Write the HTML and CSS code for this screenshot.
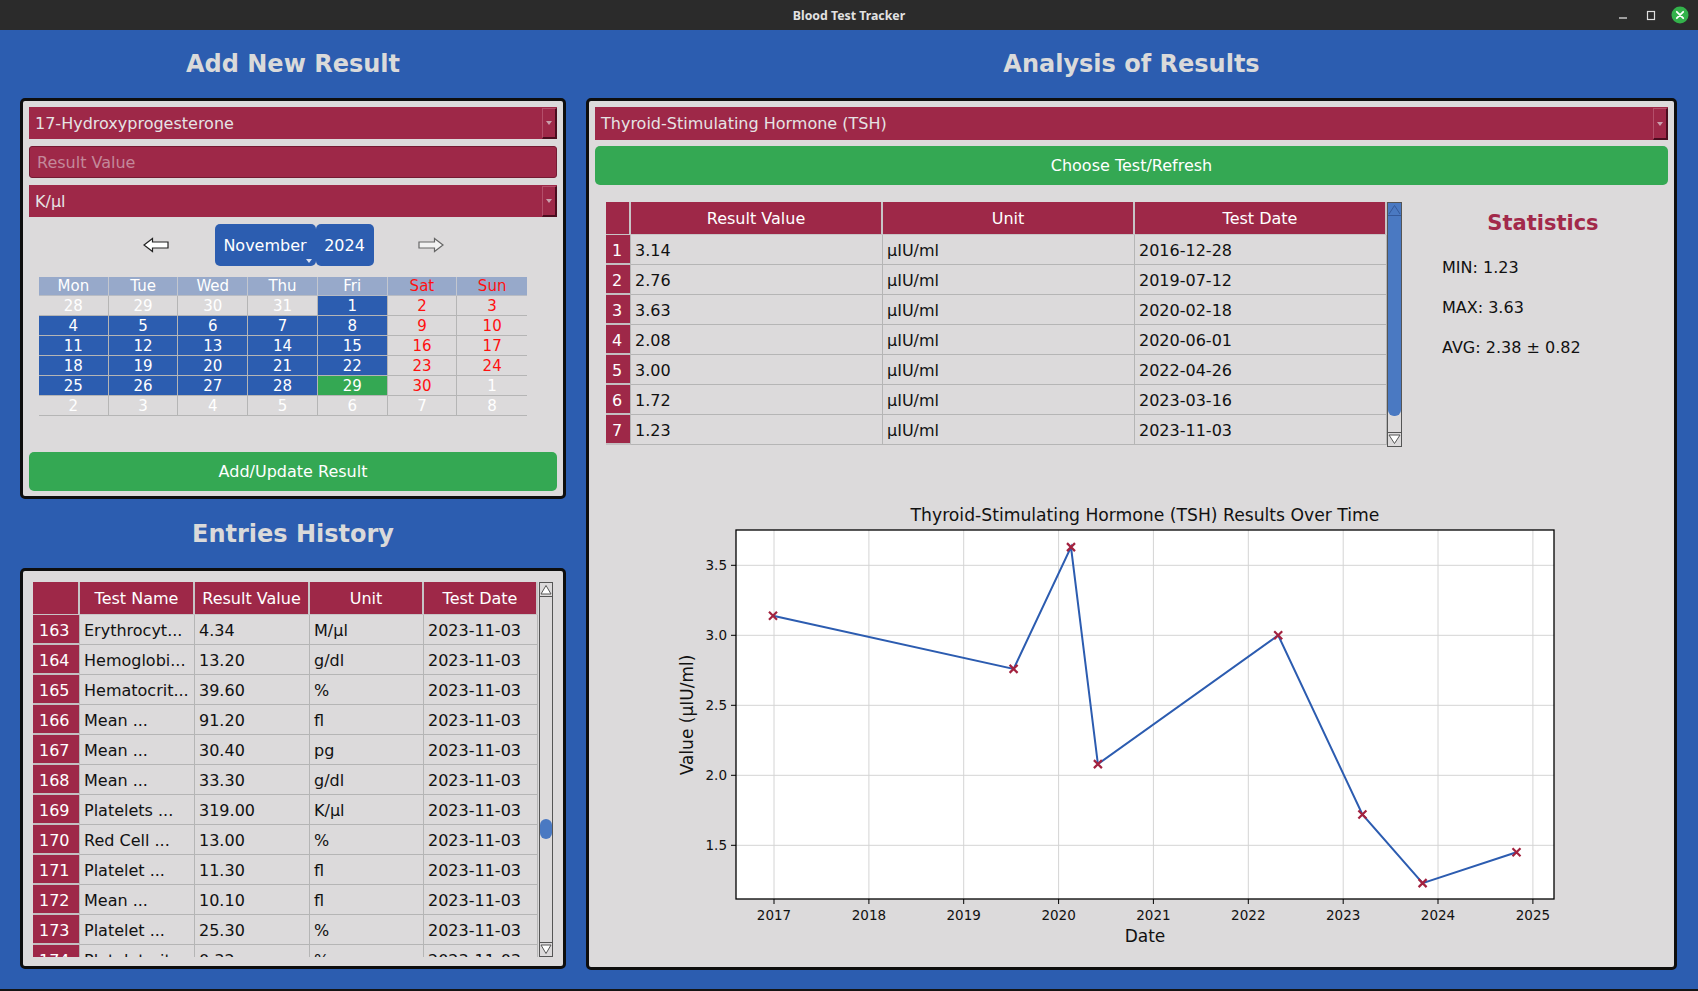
FILE: index.html
```html
<!DOCTYPE html>
<html>
<head>
<meta charset="utf-8">
<title>Blood Test Tracker</title>
<link rel="stylesheet" href="styles.css">
</head>
<body>
<div class="titlebar">
  <div></div>
  <div class="wtitle">Blood Test Tracker</div>
  <div class="winctl">
    <svg class="wbtn wmin" width="12" height="12" viewBox="0 0 12 12"><line x1="2" y1="9" x2="10" y2="9" stroke="#dedede" stroke-width="1.3"/></svg>
    <svg class="wbtn wmax" width="12" height="12" viewBox="0 0 12 12"><rect x="2.5" y="2.5" width="7" height="8" fill="none" stroke="#dedede" stroke-width="1.2"/></svg>
    <svg class="wclose" width="18" height="18" viewBox="0 0 18 18"><circle cx="9" cy="9" r="8.5" fill="#33b24b"/><path d="M5.8 5.8 L12.2 12.2 M12.2 5.8 L5.8 12.2" stroke="#fff" stroke-width="1.8" stroke-linecap="round"/></svg>
  </div>
</div>

<div class="main">
  <div class="col-left">
    <h2 class="heading">Add New Result</h2>
    <div class="panel add-panel">
      <div class="combo"><span>17-Hydroxyprogesterone</span><span class="combo-arrow"></span></div>
      <div class="entry">Result Value</div>
      <div class="combo combo-gap"><span>K/µl</span><span class="combo-arrow"></span></div>
      <div class="nav">
        <svg class="nav-arrow" width="26" height="16" viewBox="0 0 26 16"><path d="M1 8 L9.5 1.5 L9.5 5 L25 5 L25 11 L9.5 11 L9.5 14.5 Z" fill="#fff" stroke="#222" stroke-width="1.2" stroke-linejoin="miter"/></svg>
        <div class="month-box">
          <div class="month">November</div>
          <div class="year">2024</div>
        </div>
        <svg class="nav-arrow" width="26" height="16" viewBox="0 0 26 16"><path d="M25 8 L16.5 1.5 L16.5 5 L1 5 L1 11 L16.5 11 L16.5 14.5 Z" fill="#f2f2f2" stroke="#666" stroke-width="1.2" stroke-linejoin="miter"/></svg>
      </div>
      <div class="cal">
        <div class="ch">Mon</div><div class="ch">Tue</div><div class="ch">Wed</div><div class="ch">Thu</div><div class="ch">Fri</div><div class="ch red">Sat</div><div class="ch red">Sun</div>
        <div class="o">28</div><div class="o">29</div><div class="o">30</div><div class="o">31</div><div class="w">1</div><div class="we">2</div><div class="we">3</div>
        <div class="w">4</div><div class="w">5</div><div class="w">6</div><div class="w">7</div><div class="w">8</div><div class="we">9</div><div class="we">10</div>
        <div class="w">11</div><div class="w">12</div><div class="w">13</div><div class="w">14</div><div class="w">15</div><div class="we">16</div><div class="we">17</div>
        <div class="w">18</div><div class="w">19</div><div class="w">20</div><div class="w">21</div><div class="w">22</div><div class="we">23</div><div class="we">24</div>
        <div class="w">25</div><div class="w">26</div><div class="w">27</div><div class="w">28</div><div class="sel">29</div><div class="we">30</div><div class="o">1</div>
        <div class="o">2</div><div class="o">3</div><div class="o">4</div><div class="o">5</div><div class="o">6</div><div class="o">7</div><div class="o">8</div>
      </div>
      <div class="btn add-btn">Add/Update Result</div>
    </div>

    <h2 class="heading heading2">Entries History</h2>
    <div class="panel hist-panel">
      <div class="twrap hist-wrap">
        <div class="tclip hist-clip">
          <div class="trow thead hist-cols"><div></div><div>Test Name</div><div>Result Value</div><div>Unit</div><div>Test Date</div></div>
          <div class="trow hist-cols"><div class="idx">163</div><div>Erythrocyt...</div><div>4.34</div><div>M/µl</div><div>2023-11-03</div></div>
          <div class="trow hist-cols"><div class="idx">164</div><div>Hemoglobi...</div><div>13.20</div><div>g/dl</div><div>2023-11-03</div></div>
          <div class="trow hist-cols"><div class="idx">165</div><div>Hematocrit...</div><div>39.60</div><div>%</div><div>2023-11-03</div></div>
          <div class="trow hist-cols"><div class="idx">166</div><div>Mean ...</div><div>91.20</div><div>fl</div><div>2023-11-03</div></div>
          <div class="trow hist-cols"><div class="idx">167</div><div>Mean ...</div><div>30.40</div><div>pg</div><div>2023-11-03</div></div>
          <div class="trow hist-cols"><div class="idx">168</div><div>Mean ...</div><div>33.30</div><div>g/dl</div><div>2023-11-03</div></div>
          <div class="trow hist-cols"><div class="idx">169</div><div>Platelets ...</div><div>319.00</div><div>K/µl</div><div>2023-11-03</div></div>
          <div class="trow hist-cols"><div class="idx">170</div><div>Red Cell ...</div><div>13.00</div><div>%</div><div>2023-11-03</div></div>
          <div class="trow hist-cols"><div class="idx">171</div><div>Platelet ...</div><div>11.30</div><div>fl</div><div>2023-11-03</div></div>
          <div class="trow hist-cols"><div class="idx">172</div><div>Mean ...</div><div>10.10</div><div>fl</div><div>2023-11-03</div></div>
          <div class="trow hist-cols"><div class="idx">173</div><div>Platelet ...</div><div>25.30</div><div>%</div><div>2023-11-03</div></div>
          <div class="trow hist-cols"><div class="idx">174</div><div>Plateletcrit</div><div>0.32</div><div>%</div><div>2023-11-03</div></div>
        </div>
        <div class="sbar">
          <svg class="sarrow" width="12" height="14" viewBox="0 0 12 14"><path d="M1 11 L6 2.5 L11 11 Z" fill="#fff" stroke="#555" stroke-width="1"/><line x1="0" y1="13.5" x2="12" y2="13.5" stroke="#555"/></svg>
          <div class="sthumb hist-thumb"></div>
          <div class="sfill"></div>
          <svg class="sarrow" width="12" height="14" viewBox="0 0 12 14"><line x1="0" y1="0.5" x2="12" y2="0.5" stroke="#555"/><path d="M1 3 L6 11.5 L11 3 Z" fill="#fff" stroke="#555" stroke-width="1"/></svg>
        </div>
      </div>
    </div>
  </div>

  <div class="col-right">
    <h2 class="heading">Analysis of Results</h2>
    <div class="panel right-panel">
      <div class="combo combo-tall"><span>Thyroid-Stimulating Hormone (TSH)</span><span class="combo-arrow"></span></div>
      <div class="btn refresh-btn">Choose Test/Refresh</div>
      <div class="analysis-row">
        <div class="twrap res-wrap">
          <div class="tclip res-clip">
            <div class="trow thead res-cols"><div></div><div>Result Value</div><div>Unit</div><div>Test Date</div></div>
            <div class="trow res-cols"><div class="idx">1</div><div>3.14</div><div>µIU/ml</div><div>2016-12-28</div></div>
            <div class="trow res-cols"><div class="idx">2</div><div>2.76</div><div>µIU/ml</div><div>2019-07-12</div></div>
            <div class="trow res-cols"><div class="idx">3</div><div>3.63</div><div>µIU/ml</div><div>2020-02-18</div></div>
            <div class="trow res-cols"><div class="idx">4</div><div>2.08</div><div>µIU/ml</div><div>2020-06-01</div></div>
            <div class="trow res-cols"><div class="idx">5</div><div>3.00</div><div>µIU/ml</div><div>2022-04-26</div></div>
            <div class="trow res-cols"><div class="idx">6</div><div>1.72</div><div>µIU/ml</div><div>2023-03-16</div></div>
            <div class="trow res-cols"><div class="idx">7</div><div>1.23</div><div>µIU/ml</div><div>2023-11-03</div></div>
          </div>
          <div class="sbar res-sbar">
            <div class="sthumb res-thumb">
              <svg width="13" height="13" viewBox="0 0 13 13"><path d="M1 11 L6.5 2.5 L12 11" fill="none" stroke="#34599a" stroke-width="1"/><line x1="0" y1="12.5" x2="13" y2="12.5" stroke="#34599a"/></svg>
            </div>
            <div class="sfill"></div>
            <svg class="sarrow" width="13" height="14" viewBox="0 0 13 14"><line x1="0" y1="0.5" x2="13" y2="0.5" stroke="#555"/><path d="M1 3 L6.5 11.5 L12 3 Z" fill="#fff" stroke="#555" stroke-width="1"/></svg>
          </div>
        </div>
        <div class="stats">
          <div class="stats-title">Statistics</div>
          <div class="stat">MIN: 1.23</div>
          <div class="stat">MAX: 3.63</div>
          <div class="stat">AVG: 2.38 ± 0.82</div>
        </div>
      </div>
      <svg class="chart" width="1073" height="508" viewBox="595 455 1073 508">
        <text x="1145" y="521" class="c-title" text-anchor="middle">Thyroid-Stimulating Hormone (TSH) Results Over Time</text>
        <rect x="736" y="530" width="818" height="369" fill="#ffffff"/>
        <g stroke="#d4d4d4" stroke-width="1">
          <line x1="774" y1="530" x2="774" y2="899"/>
          <line x1="868.9" y1="530" x2="868.9" y2="899"/>
          <line x1="963.7" y1="530" x2="963.7" y2="899"/>
          <line x1="1058.6" y1="530" x2="1058.6" y2="899"/>
          <line x1="1153.4" y1="530" x2="1153.4" y2="899"/>
          <line x1="1248.3" y1="530" x2="1248.3" y2="899"/>
          <line x1="1343.2" y1="530" x2="1343.2" y2="899"/>
          <line x1="1438" y1="530" x2="1438" y2="899"/>
          <line x1="1532.9" y1="530" x2="1532.9" y2="899"/>
          <line x1="736" y1="565.3" x2="1554" y2="565.3"/>
          <line x1="736" y1="635.3" x2="1554" y2="635.3"/>
          <line x1="736" y1="705.3" x2="1554" y2="705.3"/>
          <line x1="736" y1="775.3" x2="1554" y2="775.3"/>
          <line x1="736" y1="845.3" x2="1554" y2="845.3"/>
        </g>
        <polyline points="773,615.7 1013.6,668.9 1071,547.1 1097.9,764.1 1278.2,635.3 1362.4,814.5 1422.6,883.1 1516.5,852.3" fill="none" stroke="#2c5cb0" stroke-width="2"/>
        <g stroke="#a3223f" stroke-width="2.2" fill="none">
          <path d="M769 611.7 L777 619.7 M769 619.7 L777 611.7"/>
          <path d="M1009.6 664.9 L1017.6 672.9 M1009.6 672.9 L1017.6 664.9"/>
          <path d="M1067 543.1 L1075 551.1 M1067 551.1 L1075 543.1"/>
          <path d="M1093.9 760.1 L1101.9 768.1 M1093.9 768.1 L1101.9 760.1"/>
          <path d="M1274.2 631.3 L1282.2 639.3 M1274.2 639.3 L1282.2 631.3"/>
          <path d="M1358.4 810.5 L1366.4 818.5 M1358.4 818.5 L1366.4 810.5"/>
          <path d="M1418.6 879.1 L1426.6 887.1 M1418.6 887.1 L1426.6 879.1"/>
          <path d="M1512.5 848.3 L1520.5 856.3 M1512.5 856.3 L1520.5 848.3"/>
        </g>
        <rect x="736" y="530" width="818" height="369" fill="none" stroke="#000" stroke-width="1.3"/>
        <g stroke="#000" stroke-width="1">
          <line x1="774" y1="899" x2="774" y2="904"/>
          <line x1="868.9" y1="899" x2="868.9" y2="904"/>
          <line x1="963.7" y1="899" x2="963.7" y2="904"/>
          <line x1="1058.6" y1="899" x2="1058.6" y2="904"/>
          <line x1="1153.4" y1="899" x2="1153.4" y2="904"/>
          <line x1="1248.3" y1="899" x2="1248.3" y2="904"/>
          <line x1="1343.2" y1="899" x2="1343.2" y2="904"/>
          <line x1="1438" y1="899" x2="1438" y2="904"/>
          <line x1="1532.9" y1="899" x2="1532.9" y2="904"/>
          <line x1="731" y1="565.3" x2="736" y2="565.3"/>
          <line x1="731" y1="635.3" x2="736" y2="635.3"/>
          <line x1="731" y1="705.3" x2="736" y2="705.3"/>
          <line x1="731" y1="775.3" x2="736" y2="775.3"/>
          <line x1="731" y1="845.3" x2="736" y2="845.3"/>
        </g>
        <g class="c-tick" text-anchor="middle">
          <text x="774" y="920">2017</text>
          <text x="868.9" y="920">2018</text>
          <text x="963.7" y="920">2019</text>
          <text x="1058.6" y="920">2020</text>
          <text x="1153.4" y="920">2021</text>
          <text x="1248.3" y="920">2022</text>
          <text x="1343.2" y="920">2023</text>
          <text x="1438" y="920">2024</text>
          <text x="1532.9" y="920">2025</text>
        </g>
        <g class="c-tick" text-anchor="end">
          <text x="727" y="570.3">3.5</text>
          <text x="727" y="640.3">3.0</text>
          <text x="727" y="710.3">2.5</text>
          <text x="727" y="780.3">2.0</text>
          <text x="727" y="850.3">1.5</text>
        </g>
        <text x="1145" y="942" class="c-label" text-anchor="middle">Date</text>
        <text x="693" y="715" class="c-label" text-anchor="middle" transform="rotate(-90 693 715)">Value (µIU/ml)</text>
      </svg>
    </div>
  </div>
</div>
</body>
</html>
```

FILE: styles.css
```css
* {
  box-sizing: border-box;
}

html, body {
  margin: 0;
  padding: 0;
}

body {
  width: 1698px;
  height: 991px;
  overflow: hidden;
  background: #2c5db0;
  border-bottom: 2px solid #141414;
  font-family: "DejaVu Sans", sans-serif;
  display: flex;
  flex-direction: column;
}

/* ---------- window title bar ---------- */
.titlebar {
  flex: none;
  height: 30px;
  background: #2b2b2b;
  display: grid;
  grid-template-columns: 1fr auto 1fr;
  align-items: center;
}

.wtitle {
  color: #e2e2e2;
  font-family: "Noto Sans", sans-serif;
  font-weight: bold;
  font-size: 12.3px;
}

.winctl {
  display: flex;
  justify-content: flex-end;
  align-items: center;
  padding-right: 9px;
}

.wmax {
  margin-left: 16px;
}

.wclose {
  margin-left: 14px;
}

/* ---------- main layout ---------- */
.main {
  flex: 1;
  display: grid;
  grid-template-columns: 546px 1091px;
  column-gap: 20px;
  padding: 0 21px 0 20px;
}

.col-left,
.col-right {
  display: flex;
  flex-direction: column;
}

.heading {
  margin: 0;
  height: 68px;
  display: flex;
  align-items: center;
  justify-content: center;
  color: #dadada;
  font-family: "DejaVu Sans", sans-serif;
  font-weight: bold;
  font-size: 24px;
  padding-top: 0;
}

.heading2 {
  height: 69px;
}

.panel {
  background: #dcdadb;
  border: 3px solid #0e0e0e;
  border-radius: 5px;
}

.add-panel {
  height: 401px;
  padding: 6px 6px 0;
}

.hist-panel {
  height: 401px;
  padding: 11px 10px 0;
}

.right-panel {
  height: 872px;
  padding: 6px 6px 0;
}

/* ---------- combo / entry ---------- */
.combo {
  height: 32px;
  background: #9e2848;
  color: #e6e3e4;
  font-size: 16px;
  padding-left: 6px;
  display: flex;
  align-items: center;
  justify-content: space-between;
}

.combo-tall {
  height: 33px;
}

.combo-gap {
  margin-top: 7px;
}

.combo-arrow {
  align-self: flex-end;
  width: 15px;
  height: 31px;
  border-top: 1px solid #b44e6a;
  border-left: 1px solid #b44e6a;
  border-right: 2px solid #4a0c1e;
  border-bottom: 2px solid #4a0c1e;
  display: flex;
  align-items: center;
  justify-content: center;
}

.combo-tall .combo-arrow {
  height: 32px;
}

.combo-arrow::after {
  content: "";
  border-left: 3px solid transparent;
  border-right: 3px solid transparent;
  border-top: 4px solid #c9a0ac;
}

.entry {
  margin-top: 7px;
  height: 32px;
  background: #9e2848;
  border: 1px solid #741a33;
  border-radius: 3px;
  color: #c4889a;
  font-size: 16px;
  padding-left: 7px;
  display: flex;
  align-items: center;
}

/* ---------- month navigation ---------- */
.nav {
  margin-top: 7px;
  height: 42px;
  display: flex;
  align-items: center;
  justify-content: center;
}

.nav-arrow {
  flex: none;
}

.month-box {
  display: flex;
  height: 42px;
  margin: 0 44px 0 46px;
}

.month,
.year {
  background: #2c5db0;
  color: #ffffff;
  font-size: 16px;
  border-radius: 5px;
  display: flex;
  align-items: center;
  justify-content: center;
}

.month {
  width: 101px;
  position: relative;
}

.month::after {
  content: "";
  position: absolute;
  right: 4px;
  bottom: 3px;
  border-left: 3px solid transparent;
  border-right: 3px solid transparent;
  border-top: 4px solid #d8e0f0;
}

.year {
  width: 58px;
}

/* ---------- calendar ---------- */
.cal {
  margin: 11px 0 0 10px;
  width: 488px;
  display: grid;
  grid-template-columns: repeat(7, 1fr);
  grid-template-rows: 19px;
  grid-auto-rows: 20px;
  font-size: 15px;
  text-align: center;
}

.cal > div {
  line-height: 20px;
  color: #ffffff;
  border-right: 1px solid #b5b5b5;
  border-bottom: 1px solid #b5b5b5;
}

.cal > div:nth-child(7n) {
  border-right: none;
}

.cal .ch {
  background: #97a9ca;
  border-right: 1px solid #c3c7cf;
  border-bottom: 1px solid #b8bcc4;
  line-height: 19px;
}

.cal .ch.red {
  color: #ff1010;
}

.cal .w {
  background: #2c5db0;
}

.cal .we {
  color: #ff1010;
}

.cal .sel {
  background: #34a853;
}

/* ---------- buttons ---------- */
.btn {
  background: #34a853;
  color: #ffffff;
  font-size: 16px;
  border-radius: 5px;
  display: flex;
  align-items: center;
  justify-content: center;
}

.add-btn {
  margin-top: 36px;
  height: 39px;
}

.refresh-btn {
  margin-top: 6px;
  height: 39px;
}

/* ---------- tables ---------- */
.twrap {
  display: flex;
}

.tclip {
  overflow: hidden;
}

.trow {
  display: grid;
  height: 30px;
  font-size: 16px;
  color: #111111;
}

.trow > div {
  border-right: 1px solid #b5b5b5;
  border-bottom: 1px solid #b5b5b5;
  padding-left: 4px;
  padding-top: 2px;
  line-height: 27px;
  white-space: nowrap;
  overflow: hidden;
}

.trow > .idx {
  background: #9e2848;
  color: #ffffff;
  padding-left: 6px;
  border-bottom: 2px solid #c3bfc1;
}

.thead {
  height: 33px;
}

.thead > div {
  background: #9e2848;
  color: #ffffff;
  text-align: center;
  padding-left: 0;
  padding-top: 0;
  line-height: 33px;
  border-right: 2px solid #c8c4c6;
  border-bottom: 1px solid #c8c4c6;
}

.hist-wrap {
  height: 375px;
}

.hist-clip {
  width: 505px;
  height: 375px;
}

.hist-cols {
  grid-template-columns: 47px 115px 115px 114px 114px;
}

.res-wrap {
  margin-left: 11px;
  height: 245px;
}

.res-clip {
  width: 781px;
  height: 245px;
}

.res-cols {
  grid-template-columns: 25px 252px 252px 252px;
}

/* ---------- scrollbars ---------- */
.sbar {
  width: 14px;
  margin-left: 1px;
  border: 1px solid #555555;
  background: #dcdadb;
  display: flex;
  flex-direction: column;
  align-items: center;
}

.res-sbar {
  width: 15px;
  margin-left: 0;
}

.sarrow {
  flex: none;
  display: block;
}

.sfill {
  flex: 1;
}

.sthumb {
  flex: none;
  background: #4a79c2;
  border-radius: 6px;
}

.hist-thumb {
  width: 12px;
  height: 20px;
  margin-top: 222px;
}

.res-thumb {
  width: 13px;
  height: 213px;
  border-radius: 0 0 6px 6px;
}

.res-thumb svg {
  display: block;
}

/* ---------- statistics ---------- */
.analysis-row {
  margin-top: 17px;
  height: 245px;
  display: flex;
}

.stats {
  flex: 1;
}

.stats-title {
  height: 42px;
  line-height: 42px;
  padding-left: 16px;
  text-align: center;
  color: #a2294a;
  font-weight: bold;
  font-size: 21px;
  margin-bottom: 4px;
}

.stat {
  height: 40px;
  line-height: 40px;
  padding-left: 40px;
  font-size: 16px;
  color: #111111;
}

/* ---------- chart ---------- */
.chart {
  display: block;
  margin-top: 8px;
}

.c-title {
  font-family: "DejaVu Sans", sans-serif;
  font-size: 17.2px;
  fill: #111111;
}

.c-tick {
  font-family: "DejaVu Sans", sans-serif;
  font-size: 13.5px;
  fill: #111111;
}

.c-label {
  font-family: "DejaVu Sans", sans-serif;
  font-size: 17px;
  fill: #111111;
}
```
